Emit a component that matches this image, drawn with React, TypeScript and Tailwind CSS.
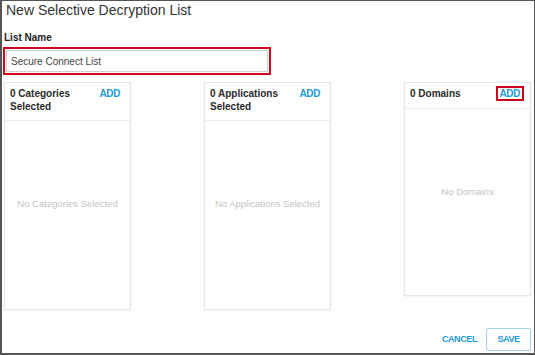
const font = "font-['Liberation_Sans',Arial,sans-serif]";

function Card({
  title,
  empty,
  height,
  highlightAdd = false,
}: {
  title: string[];
  empty: string;
  height: string;
  highlightAdd?: boolean;
}) {
  return (
    <div className={`${height} w-[127px] flex flex-col border border-[#e6e6e6] bg-white shadow-[0_1px_2px_rgba(0,0,0,0.06)]`}>
      <div className="flex items-start justify-between border-b border-[#ececec] pl-[5px] pr-[6px] pt-[4px] pb-[7px]">
        <div className="text-[10px] font-bold leading-[13px] text-[#2a2a2a]">
          {title.map((t) => (
            <div key={t}>{t}</div>
          ))}
        </div>
        {highlightAdd ? (
          <span className="mt-[-1px] border-2 border-[#d0021b] px-[2px] text-[10px] font-bold leading-[11px] tracking-[-0.4px] text-[#1d9ad8]">
            ADD
          </span>
        ) : (
          <span className="mr-[4px] text-[10px] font-bold leading-[13px] tracking-[-0.4px] text-[#1d9ad8]">
            ADD
          </span>
        )}
      </div>
      <div className="pt-[77px] text-center text-[9.5px] leading-[12px] text-[#c4c4c4]">{empty}</div>
    </div>
  );
}

export default function App() {
  return (
    <div className={`${font} flex h-[355px] w-[535px] flex-col border border-b-2 border-l-2 border-[#555] bg-white`}>
      <h1 className="ml-[4px] text-[14px] leading-[18px] text-[#333]">New Selective Decryption List</h1>
      <div className="ml-[2px] mt-[12px] text-[10px] font-bold leading-[13px] text-[#222]">List Name</div>
      <div className="ml-[1px] mt-[3px] h-[28px] w-[268px] border-2 border-[#d0021b] p-[1px]">
        <div className="flex h-full items-center border border-[#cfcfcf] px-[4px] text-[10px] text-[#444]">
          Secure Connect List
        </div>
      </div>

      <div className="ml-[2px] mr-[3px] mt-[7px] flex items-start justify-between">
        <Card title={["0 Categories", "Selected"]} empty="No Categories Selected" height="h-[228px]" />
        <Card title={["0 Applications", "Selected"]} empty="No Applications Selected" height="h-[228px]" />
        <Card title={["0 Domains"]} empty="No Domains" height="h-[214px]" highlightAdd />
      </div>

      <div className="mb-[2px] mr-[3px] mt-auto flex items-center justify-end gap-[9px]">
        <button className="text-[9px] font-bold tracking-[-0.4px] text-[#1d9ad8]">CANCEL</button>
        <button className="h-[23px] w-[45px] rounded-[2px] border border-[#9fd2ec] text-[9px] font-bold tracking-[-0.4px] text-[#1d9ad8]">
          SAVE
        </button>
      </div>
    </div>
  );
}
